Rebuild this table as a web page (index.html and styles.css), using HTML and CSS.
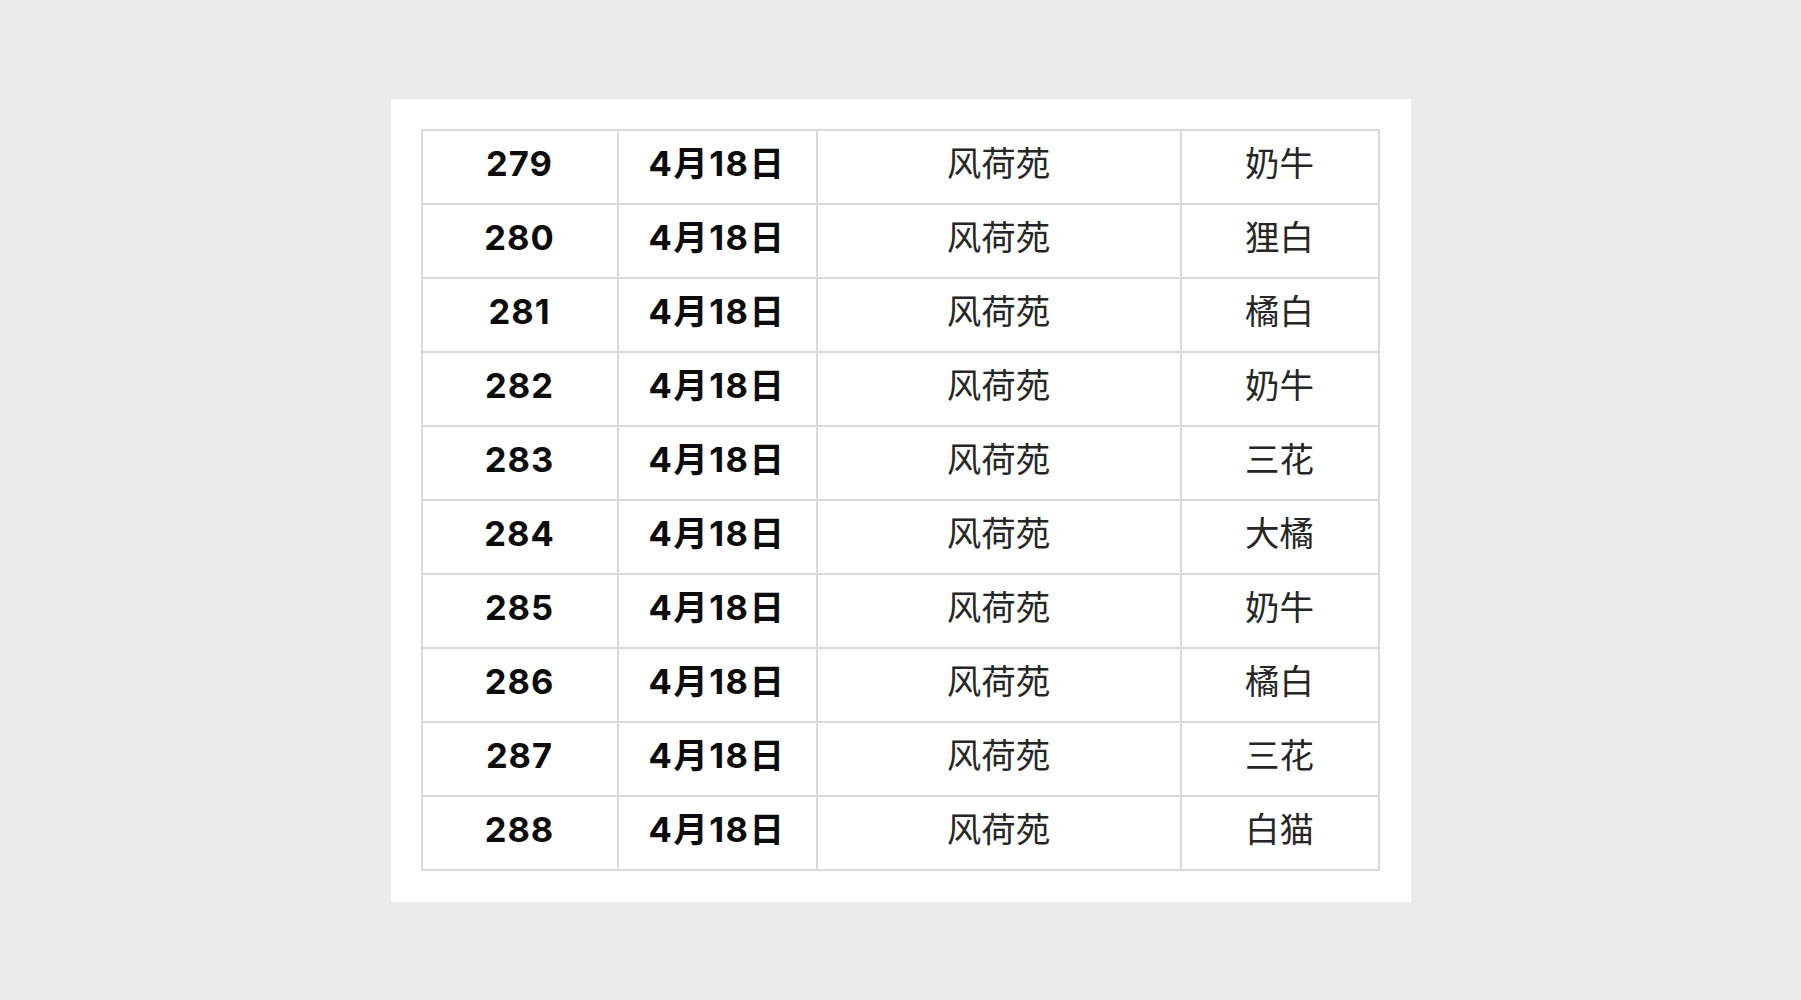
FILE: index.html
```html
<!DOCTYPE html>
<html lang="zh">
<head>
<meta charset="utf-8">
<title>表格</title>
<link rel="stylesheet" href="styles.css">
</head>
<body>
<main class="stage">
  <section class="sheet">
    <table class="grid">
      <colgroup>
        <col class="c-id">
        <col class="c-date">
        <col class="c-place">
        <col class="c-cat">
      </colgroup>
      <tbody>
        <tr><td class="num">279</td><td class="date">4月18日</td><td>风荷苑</td><td>奶牛</td></tr>
        <tr><td class="num">280</td><td class="date">4月18日</td><td>风荷苑</td><td>狸白</td></tr>
        <tr><td class="num">281</td><td class="date">4月18日</td><td>风荷苑</td><td>橘白</td></tr>
        <tr><td class="num">282</td><td class="date">4月18日</td><td>风荷苑</td><td>奶牛</td></tr>
        <tr><td class="num">283</td><td class="date">4月18日</td><td>风荷苑</td><td>三花</td></tr>
        <tr><td class="num">284</td><td class="date">4月18日</td><td>风荷苑</td><td>大橘</td></tr>
        <tr><td class="num">285</td><td class="date">4月18日</td><td>风荷苑</td><td>奶牛</td></tr>
        <tr><td class="num">286</td><td class="date">4月18日</td><td>风荷苑</td><td>橘白</td></tr>
        <tr><td class="num">287</td><td class="date">4月18日</td><td>风荷苑</td><td>三花</td></tr>
        <tr><td class="num">288</td><td class="date">4月18日</td><td>风荷苑</td><td>白猫</td></tr>
      </tbody>
    </table>
  </section>
</main>
</body>
</html>
```
FILE: styles.css
```css
html, body {
  margin: 0;
  padding: 0;
  background: #ebebeb;
}
.stage {
  height: 1000px;
  display: flex;
  align-items: center;
  justify-content: center;
}
.sheet {
  background: #ffffff;
  padding: 30px 31px 31px 30px;
}
.grid {
  border-collapse: collapse;
  table-layout: fixed;
  width: 957px;
  font-family: Inter, "Noto Sans CJK SC", sans-serif;
  font-size: 34.5px;
  color: #262626;
}
.c-id { width: 196px; }
.c-date { width: 199px; }
.c-place { width: 364px; }
.c-cat { width: 198px; }
.grid td {
  height: 74px;
  padding: 0 0 4px 0;
  box-sizing: border-box;
  border: 2px solid #dadada;
  text-align: center;
  vertical-align: middle;
  line-height: 1;
}
.grid td.num,
.grid td.date {
  font-weight: 700;
  color: #0c0c0c;
  letter-spacing: 1px;
}
.grid td.date {
  letter-spacing: 1.5px;
}
```
